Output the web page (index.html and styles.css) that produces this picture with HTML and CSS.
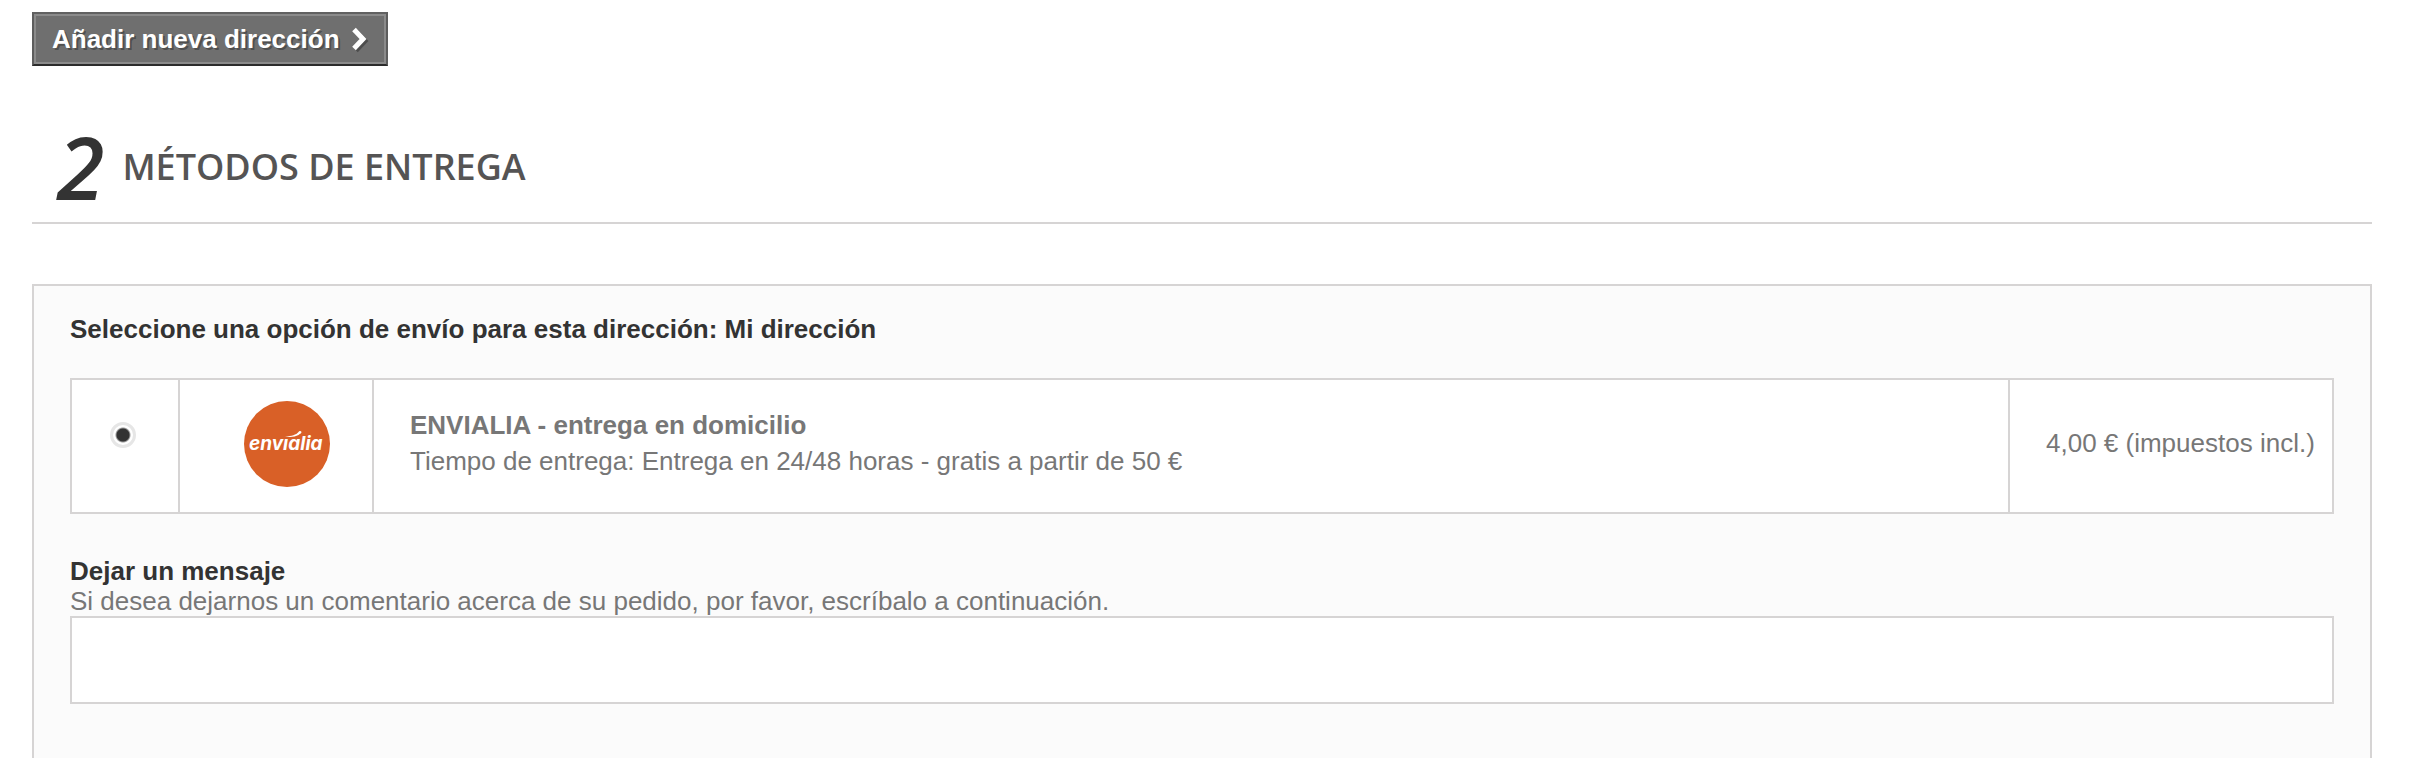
FILE: index.html
```
<!DOCTYPE html>
<html lang="es">
  <head>
    <meta charset="UTF-8" />
    <meta name="viewport" content="width=device-width, initial-scale=1.0" />
    <title>Métodos de entrega</title>
    <link rel="stylesheet" href="styles.css">
  </head>
  <body>
    <div class="container">
      <button type="button" class="add-address">
        Añadir nueva dirección
        <svg class="chevron" viewBox="0 0 18 26" aria-hidden="true">
          <path d="M4 3.500L13 13L4 22.500" />
        </svg>
      </button>

      <h2 class="step-heading">
        <span class="step-number">2</span>
        Métodos de entrega
      </h2>

      <form class="delivery">
        <p class="title">Seleccione una opción de envío para esta dirección: Mi dirección</p>

        <table class="options">
          <tr>
            <td class="option-radio">
              <input type="radio" name="carrier" id="envialia" checked />
            </td>
            <td class="option-logo">
              <svg class="logo" viewBox="0 0 86 86" role="img" aria-label="envialia">
                <circle cx="43" cy="43" r="43" fill="#d96027" />
                <text x="5" y="49" class="logo-text">envıalia</text>
                <path d="M41 35.500C48 35 52 34 54.500 31C55 29.500 57 29.500 57.500 31C57.500 32.500 55.500 33 54.500 34C51 36 46 36.500 41 35.500Z" fill="#fff" />
              </svg>
            </td>
            <td class="option-name">
              <label for="envialia">
                <strong>ENVIALIA - entrega en domicilio</strong><br />
                Tiempo de entrega: Entrega en 24/48 horas - gratis a partir de 50 €
              </label>
            </td>
            <td class="option-price">4,00 € (impuestos incl.)</td>
          </tr>
        </table>

        <label class="title" for="message">Dejar un mensaje</label>
        <p>Si desea dejarnos un comentario acerca de su pedido, por favor, escríbalo a continuación.</p>
        <textarea id="message" name="message"></textarea>
      </form>
    </div>
  </body>
</html>
```

FILE: styles.css
```
* {
  box-sizing: border-box;
}

body {
  margin: 0;
  background-color: #ffffff;
  color: #777777;
  font-family: Arial, "Liberation Sans", sans-serif;
  font-size: 26px;
  line-height: 30px;
}

p {
  margin: 0;
}

.container {
  padding: 12px 56px 0 32px;
}

.add-address {
  display: flex;
  align-items: center;
  gap: 10px;
  padding: 8px 18px;
  background-color: #6f6f6f;
  border: 2px solid;
  border-color: #616161 #5d5d5d #2b2b2b #5d5d5d;
  box-shadow: inset 0 0 0 2px #8b8b8b;
  color: #ffffff;
  font-family: inherit;
  font-size: 26px;
  font-weight: bold;
  line-height: 34px;
  text-shadow: 2px 2px rgba(0, 0, 0, 0.3);
  cursor: pointer;
}

.chevron {
  width: 18px;
  height: 26px;
  fill: none;
  stroke: #ffffff;
  stroke-width: 5;
  filter: drop-shadow(2px 2px 0 rgba(0, 0, 0, 0.3));
}

.step-heading {
  display: flex;
  align-items: center;
  gap: 18px;
  margin: 59px 0 60px;
  padding: 0 0 13px 25px;
  border-bottom: 2px solid #d6d4d4;
  color: #555454;
  font-family: "Open Sans", sans-serif;
  font-size: 36px;
  font-weight: 600;
  line-height: 40px;
  text-transform: uppercase;
}

.step-number {
  color: #333333;
  font-size: 86px;
  font-style: italic;
  line-height: 84px;
}

.delivery {
  padding: 28px 36px 54px;
  background-color: #fbfbfb;
  border: 2px solid #d6d4d4;
}

.title {
  display: block;
  color: #333333;
  font-weight: bold;
}

.options {
  width: 100%;
  margin: 34px 0 42px;
  background-color: #ffffff;
  border-collapse: collapse;
  line-height: 36px;
}

.options td {
  padding: 20px 36px 26px;
  border: 2px solid #d6d4d4;
}

.options .option-radio {
  width: 108px;
  padding: 20px 4px 42px 0;
}

.option-radio input {
  appearance: none;
  display: block;
  width: 26px;
  height: 26px;
  margin: 0 auto;
  border: 3px solid #e6e6e6;
  border-radius: 50%;
  background: radial-gradient(circle, #333333 6px, #ffffff 8px);
}

.options .option-logo {
  width: 194px;
  padding: 21px 0 25px 64px;
}

.logo {
  display: block;
  width: 86px;
  height: 86px;
}

.logo-text {
  fill: #ffffff;
  font-family: Inter, sans-serif;
  font-size: 19px;
  font-style: italic;
  font-weight: bold;
}

.options .option-price {
  width: 324px;
  padding-right: 0;
  white-space: nowrap;
}

textarea {
  display: block;
  width: 100%;
  height: 88px;
  padding: 12px;
  border: 2px solid #d6d4d4;
  border-radius: 0;
  background-color: #ffffff;
  color: #777777;
  font: inherit;
  resize: none;
}
```
